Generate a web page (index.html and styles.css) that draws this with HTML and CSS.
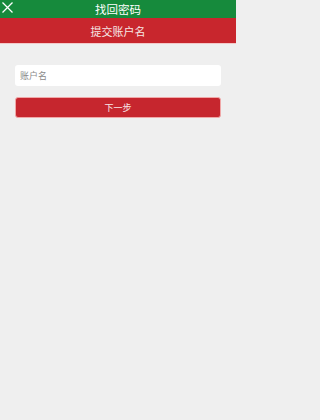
FILE: index.html
```html
<!DOCTYPE html>
<html>
<head>
<meta charset="utf-8">
<link rel="stylesheet" href="styles.css">
</head>
<body>
<div class="topbar">
  <svg class="close" viewBox="0 0 13 13" width="13" height="13"><path d="M1.5 1.5L11.5 11.5M11.5 1.5L1.5 11.5" stroke="#fff" stroke-width="1.3" fill="none"/></svg>
  <span class="title">找回密码</span>
</div>
<div class="subbar">提交账户名</div>
<div class="form">
  <input class="field" type="text" placeholder="账户名">
  <button class="next">下一步</button>
</div>
</body>
</html>
```
FILE: styles.css
```css
html, body { margin: 0; padding: 0; }
body {
  background: #efefef;
  font-family: "Noto Sans CJK SC", "Noto Sans", sans-serif;
  width: 236px;
  height: 420px;
}
.topbar {
  height: 18px;
  background: #168a3c;
  display: flex;
  align-items: center;
  justify-content: center;
  position: relative;
}
.close { position: absolute; left: 1px; top: 1px; }
.title { color: #fff; font-size: 11.5px; line-height: 18px; }
.subbar {
  height: 25px;
  background: #c8262d;
  color: #f6e6e6;
  font-size: 11px;
  display: flex;
  align-items: center;
  justify-content: center;
  border-bottom: 1px solid #f3c9c9;
}
.form {
  padding: 21px 15px 0 15px;
  display: flex;
  flex-direction: column;
  gap: 11px;
}
.field {
  box-sizing: border-box;
  height: 21px;
  border: none;
  border-radius: 3px;
  background: #fff;
  padding: 0 5px;
  font-family: inherit;
  font-size: 9px;
  outline: none;
}
.field::placeholder { color: #8a8a8a; }
.next {
  box-sizing: border-box;
  height: 21px;
  border: 1px solid #f0a8a8;
  border-radius: 3px;
  background: #c6262e;
  color: #f8e8e8;
  font-family: inherit;
  font-size: 9px;
  padding: 0;
}
```
